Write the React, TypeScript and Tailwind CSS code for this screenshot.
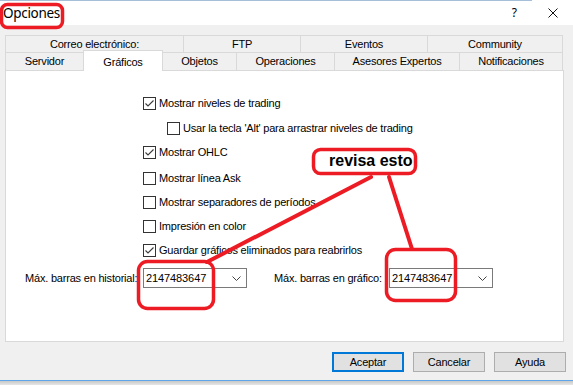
import React from "react";

const ui = "font-['Liberation_Sans',Arial,sans-serif] text-[11px] tracking-[-0.2px] text-black";

function Check({ checked }: { checked?: boolean }) {
  return (
    <span className="flex h-[13px] w-[13px] shrink-0 items-center justify-center border border-[#333333] bg-white">
      {checked && (
        <svg width="11" height="11" viewBox="0 0 11 11">
          <polyline points="1.5,5.5 4,8 9.5,2.5" fill="none" stroke="#3a3a3a" strokeWidth="1.1" />
        </svg>
      )}
    </span>
  );
}

function Row({ label, checked, className = "" }: { label: string; checked?: boolean; className?: string }) {
  return (
    <div className={`flex h-[13px] items-center gap-[3px] ${className}`}>
      <Check checked={checked} />
      <span className="leading-none">{label}</span>
    </div>
  );
}

function Combo() {
  return (
    <div className="flex h-[20px] w-[104px] items-center justify-between border border-[#7a7a7a] bg-white pl-[2px] pr-[5px]">
      <span className="text-[11px] tracking-[-0.1px]">2147483647</span>
      <svg width="9" height="5" viewBox="0 0 9 5">
        <polyline points="0.5,0.5 4.5,4.5 8.5,0.5" fill="none" stroke="#444" strokeWidth="1" />
      </svg>
    </div>
  );
}

const row1 = [
  ["Correo electrónico:", "w-[178px]"],
  ["FTP", "w-[117px]"],
  ["Eventos", "w-[127px]"],
  ["Community", "w-[136px] border-r"],
];

function Tab({ label, w }: { label: string; w: string }) {
  return (
    <div className={`flex h-full items-center justify-center border-l border-t border-[#d9d9d9] bg-[#f0f0f0] ${w}`}>
      {label}
    </div>
  );
}

export default function App() {
  return (
    <div className={`relative h-[385px] w-[573px] overflow-hidden bg-[#f0f0f0] ${ui}`}>
      {/* title bar */}
      <div className="flex h-[25px] flex-col bg-white">
        <div className="h-px w-[532px] bg-[#a6bfd8]" />
        <div className="flex flex-1 items-start">
          <span className="ml-[3px] mt-[2px] font-['Noto_Sans',sans-serif] text-[13.5px] tracking-[-0.3px]">Opciones</span>
          <span className="ml-auto mt-[3px] font-['Noto_Sans',sans-serif] text-[12px] tracking-normal">?</span>
          <svg className="ml-[31px] mr-[15px] mt-[7px]" width="10" height="10" viewBox="0 0 10 10">
            <path d="M0.5 0.5L9.5 9.5M9.5 0.5L0.5 9.5" stroke="#111" strokeWidth="1" />
          </svg>
        </div>
      </div>

      {/* body */}
      <div className="flex h-[355px] flex-col px-[5px] pt-[10px]">
        <div className="flex h-[17px]">
          {row1.map(([l, w]) => (
            <Tab key={l} label={l} w={w} />
          ))}
        </div>
        <div className="relative z-10 flex h-[18px] items-end">
          <Tab label="Servidor" w="w-[78px]" />
          <div className="-mb-px flex h-[21px] w-[80px] items-start justify-center border-l border-r border-t border-[#d9d9d9] bg-white pt-[3px]">
            Gráficos
          </div>
          <Tab label="Objetos" w="w-[73px] border-l-0" />
          <Tab label="Operaciones" w="w-[98px]" />
          <Tab label="Asesores Expertos" w="w-[125px]" />
          <Tab label="Notificaciones" w="w-[104px] border-r" />
        </div>

        {/* panel */}
        <div className="flex h-[272px] w-[559px] flex-col border border-[#d9d9d9] bg-white pt-[26px]">
          <div className="flex flex-col pl-[137px]">
            <Row label="Mostrar niveles de trading" checked />
            <Row label="Usar la tecla 'Alt' para arrastrar niveles de trading" className="ml-[24px] mt-[12px]" />
            <Row label="Mostrar OHLC" checked className="mt-[11px]" />
            <Row label="Mostrar línea Ask" className="mt-[13px]" />
            <Row label="Mostrar separadores de períodos" className="mt-[11px]" />
            <Row label="Impresión en color" className="mt-[11px]" />
            <Row label="Guardar gráficos eliminados para reabrirlos" checked className="mt-[11px]" />
          </div>
          <div className="mt-[11px] flex items-center pl-[19px]">
            <span className="w-[118px]">Máx. barras en historial:</span>
            <Combo />
            <span className="ml-[27px] w-[115px]">Máx. barras en gráfico:</span>
            <Combo />
          </div>
        </div>

        {/* buttons */}
        <div className="mr-[2px] mt-[10px] flex justify-end gap-[9px]">
          <button className="flex h-[20px] w-[72px] items-center justify-center border-2 border-[#0078d7] bg-[#e1e1e1]">
            Aceptar
          </button>
          <button className="flex h-[20px] w-[72px] items-center justify-center border border-[#adadad] bg-[#e1e1e1]">
            Cancelar
          </button>
          <button className="flex h-[20px] w-[72px] items-center justify-center border border-[#adadad] bg-[#e1e1e1]">
            Ayuda
          </button>
        </div>
      </div>
      <div className="h-px bg-[#5ba7e8]" />
      <div className="h-[4px] bg-gradient-to-b from-[#c9c9c9] to-[#e6e6e6]" />

      {/* red annotations */}
      <svg className="pointer-events-none absolute inset-0" width="573" height="385" viewBox="0 0 573 385">
        <g fill="none" stroke="#ed1c24" strokeWidth="3.5" strokeLinecap="round">
          <rect x="1.5" y="4.5" width="61" height="23" rx="6" />
          <rect x="313.5" y="149.5" width="102" height="24" rx="7" />
          <rect x="138.5" y="261.5" width="75" height="47" rx="9" />
          <rect x="386.5" y="249.5" width="69" height="51" rx="9" />
          <line x1="371" y1="177" x2="207" y2="262" strokeWidth="4" />
          <line x1="389" y1="177" x2="412" y2="249" strokeWidth="4" />
        </g>
      </svg>
      <span className="absolute left-[329px] top-[151px] font-['Liberation_Sans',Arial,sans-serif] text-[16px] font-bold leading-[20px] tracking-normal">
        revisa esto
      </span>
    </div>
  );
}
